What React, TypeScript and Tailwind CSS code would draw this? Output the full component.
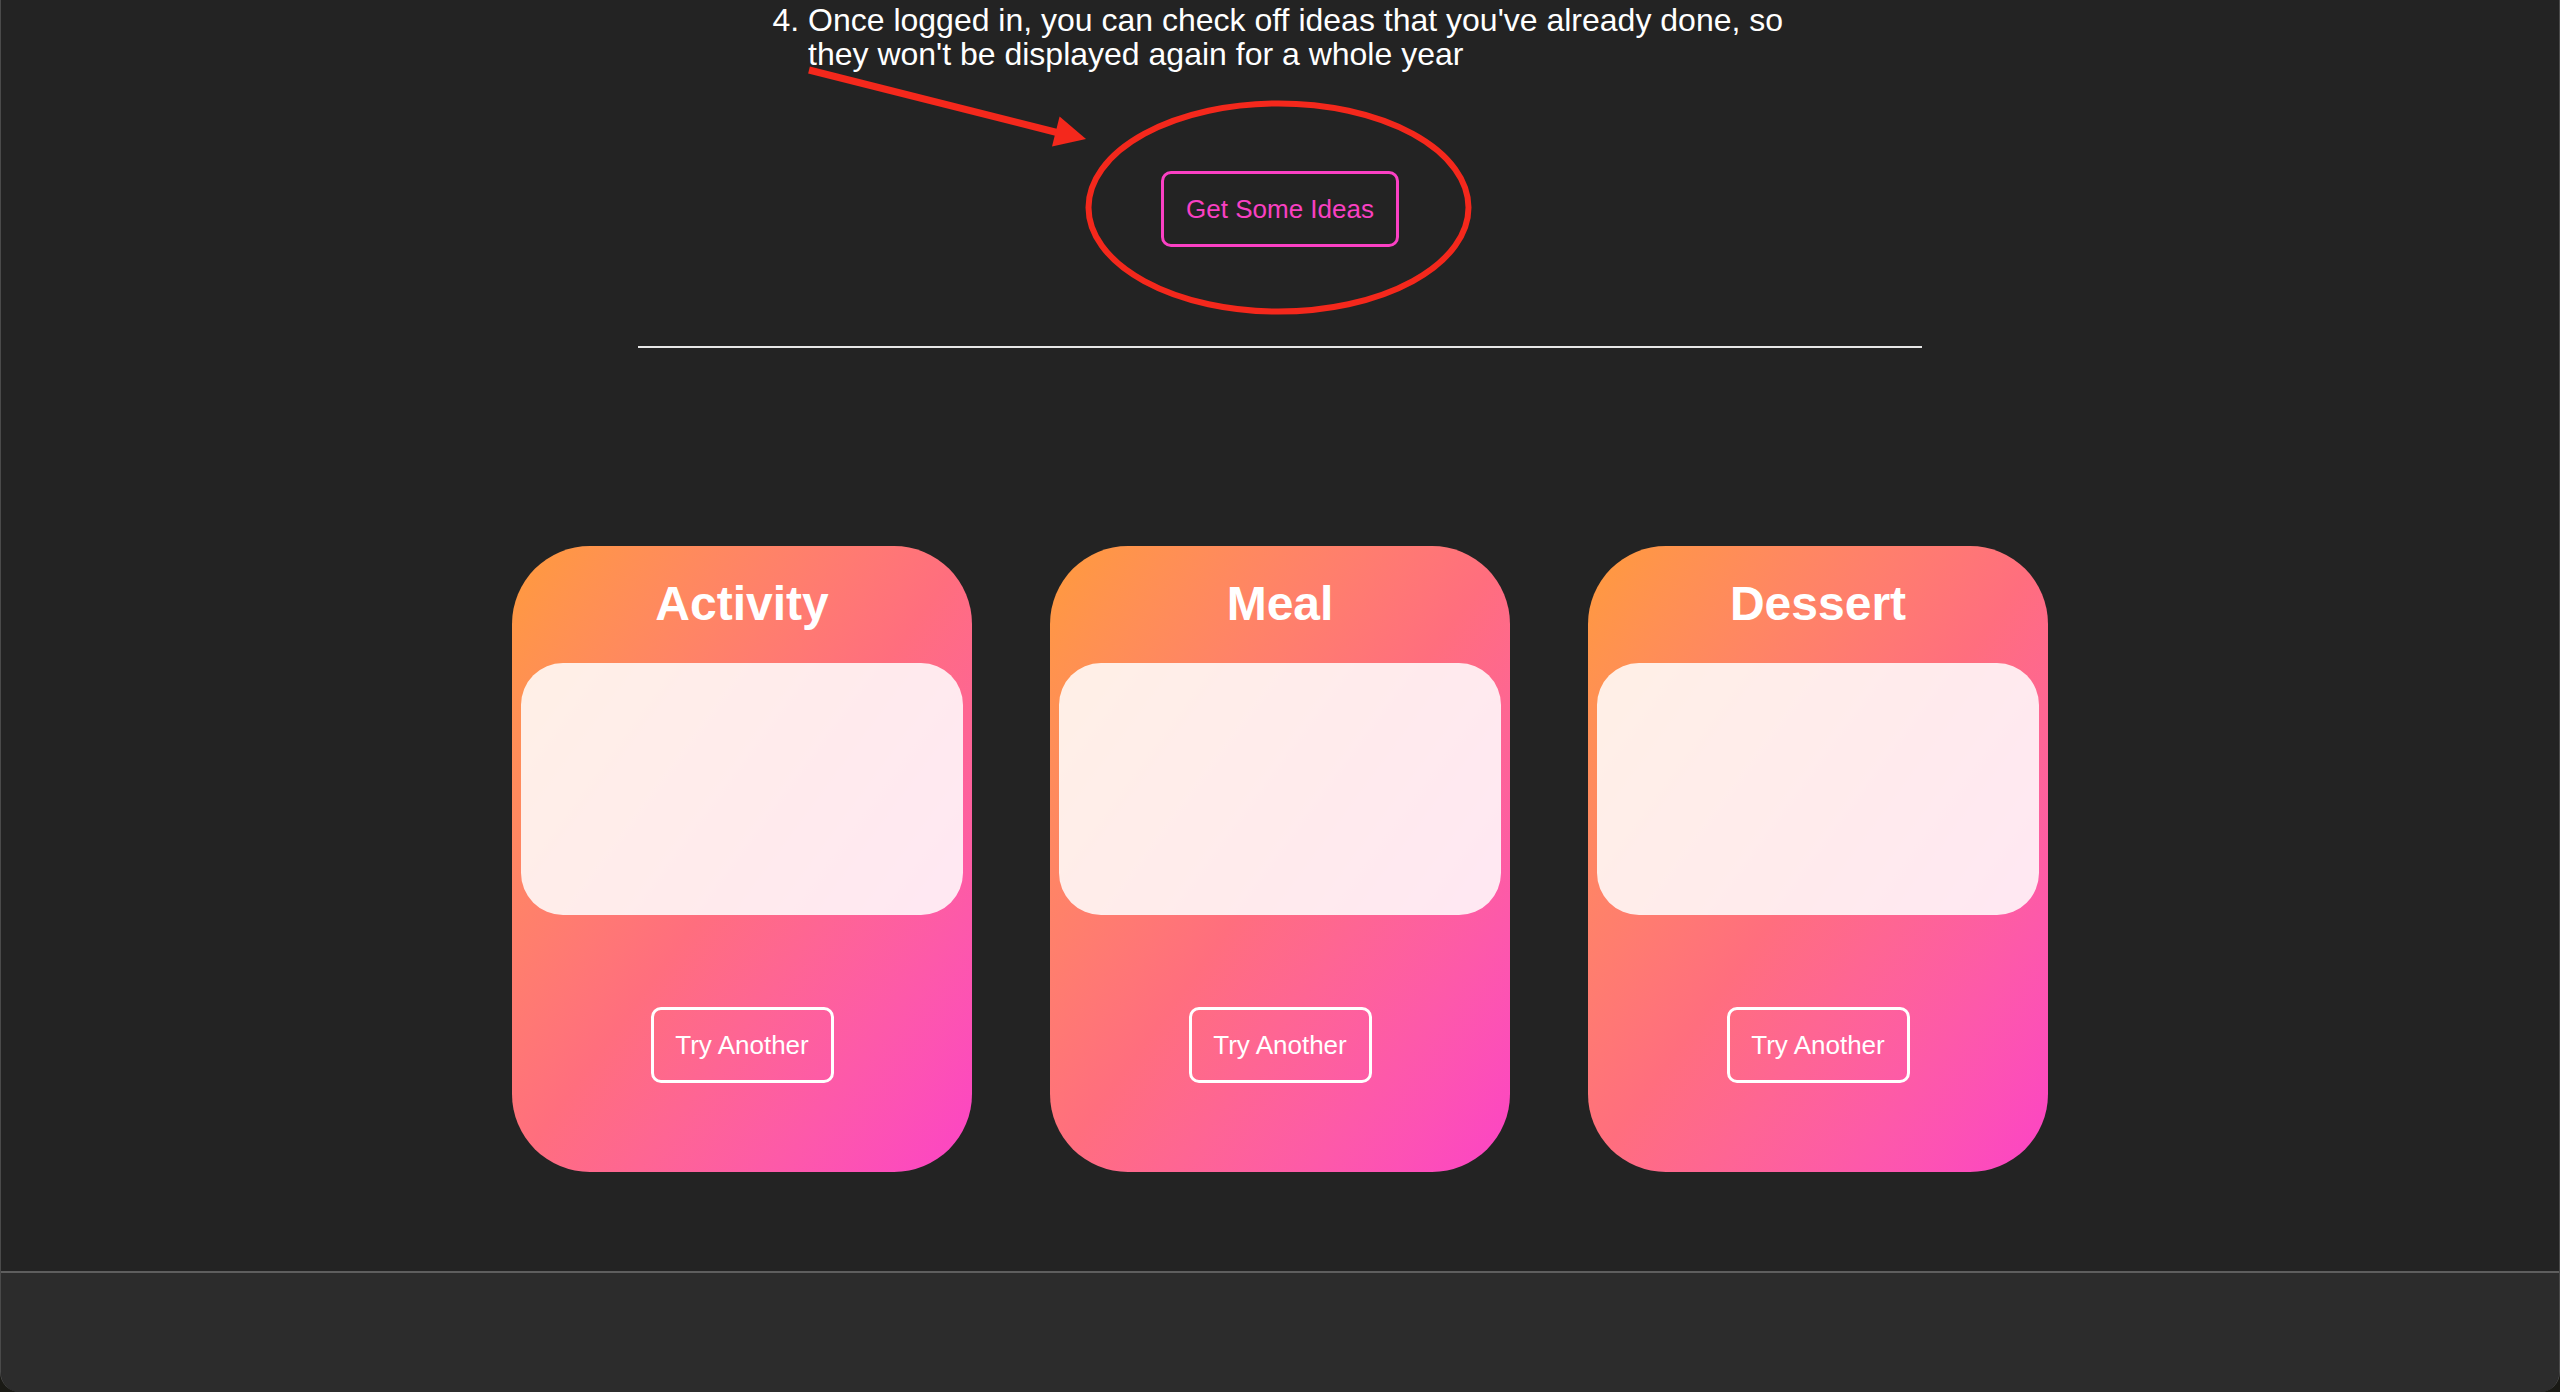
import React from "react";

function Card({ title }: { title: string }) {
  return (
    <div className="flex h-[626px] w-[460px] flex-col items-center rounded-[78px] bg-linear-to-br from-[#ff9b3a] via-[#ff6e7e] to-[#fc42c6] pt-[30px]">
      <h2 className="text-[48px] font-bold leading-[56px] text-white">{title}</h2>
      <div className="mt-[31px] h-[252px] w-[442px] rounded-[42px] bg-white/[0.86]" />
      <button className="mt-[92px] flex h-[76px] w-[183px] items-center justify-center rounded-[10px] border-[3px] border-white text-[26px] leading-[30px] text-white">
        Try Another
      </button>
    </div>
  );
}

export default function App() {
  return (
    <div className="h-[1392px] w-[2560px] bg-[#1a1a15] font-['Liberation_Sans',Arial,sans-serif]">
      <div className="relative flex h-[1392px] flex-col overflow-hidden rounded-b-[20px] border-x border-[#4a4a4a] bg-[#232323]">
        <main className="flex flex-1 flex-col items-center">
          <div className="w-[1000px] pt-[3px]">
            <ol start={4} className="list-decimal pl-[28px] text-[32px] leading-[34px] text-white">
              <li className="whitespace-nowrap">
                Once logged in, you can check off ideas that you've already done, so
                <br />
                they won't be displayed again for a whole year
              </li>
            </ol>
          </div>
          <button className="mt-[100px] flex h-[76px] w-[238px] items-center justify-center rounded-[10px] border-[3px] border-[#fb40c4] text-[26px] leading-[30px] text-[#f940c2]">
            Get Some Ideas
          </button>
          <div className="mt-[99px] h-[2px] w-[1284px] bg-[#e6e6e6]" />
          <div className="mt-[198px] flex gap-[78px]">
            <Card title="Activity" />
            <Card title="Meal" />
            <Card title="Dessert" />
          </div>
        </main>
        <footer className="h-[121px] shrink-0 border-t-2 border-[#5e5e5e] bg-[#2c2c2c]" />
        <svg
          className="pointer-events-none absolute left-0 top-0"
          width="2560"
          height="400"
          viewBox="0 0 2560 400"
        >
          <ellipse cx="1277.5" cy="207.5" rx="190" ry="104" fill="none" stroke="#f4281c" strokeWidth="6" />
          <line x1="808" y1="70" x2="1058" y2="133" stroke="#f4281c" strokeWidth="7" />
          <polygon points="1085,139 1058.6,116.5 1051,146.5" fill="#f4281c" />
        </svg>
      </div>
    </div>
  );
}
